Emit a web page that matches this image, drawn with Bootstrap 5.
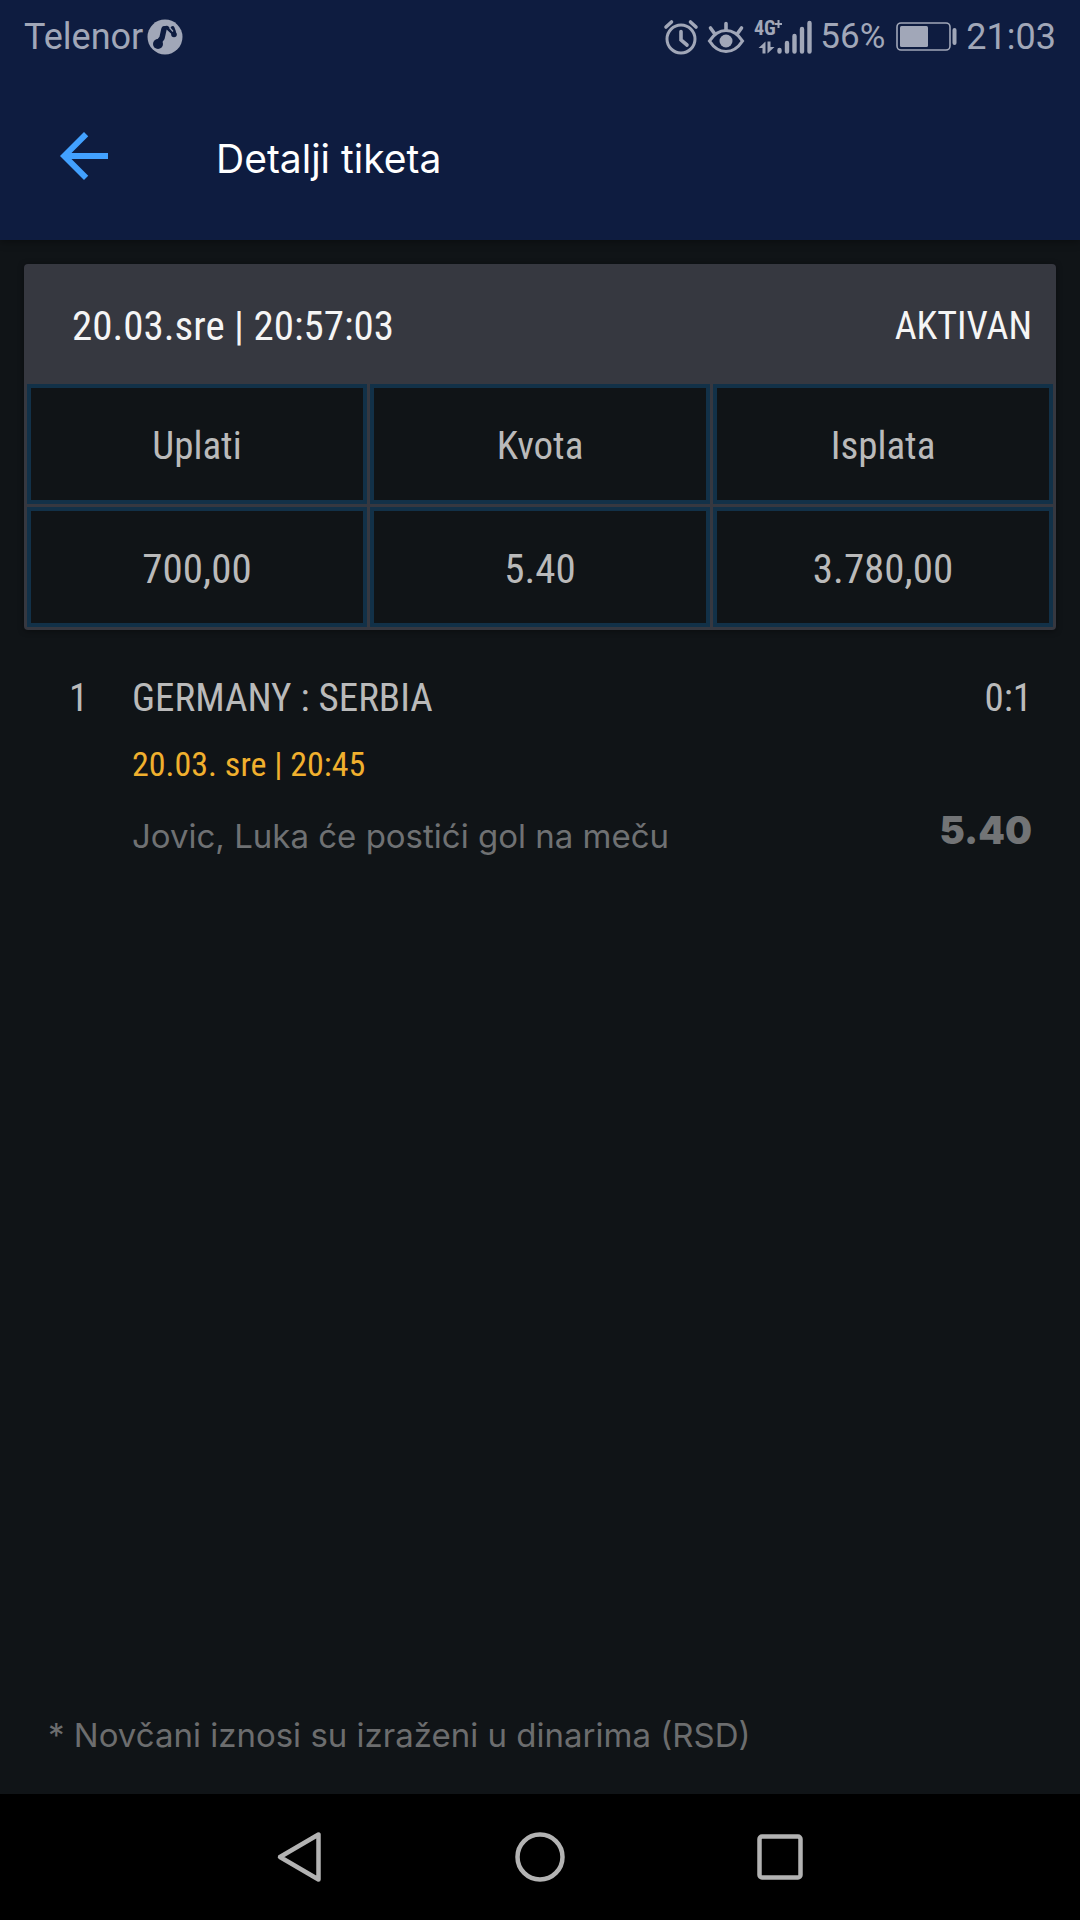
<!DOCTYPE html>
<html lang="sr-Latn">
<head>
<meta charset="utf-8">
<meta name="viewport" content="width=device-width, initial-scale=1">
<title>Detalji tiketa</title>
<link rel="stylesheet" href="https://cdn.jsdelivr.net/npm/bootstrap@5.3.0/dist/css/bootstrap.min.css">
<style>
  body { background: #101417; color: #bababa; font-family: Inter, "Liberation Sans", sans-serif; }
  svg { display: block; flex: none; }
  .condensed { font-family: "Roboto Condensed", Roboto, "Liberation Sans", sans-serif; }
  .app-top { background: #0e1c40; box-shadow: 0 2px 8px rgba(0, 0, 0, .35); }
  .status-bar { height: 72px; padding: 2px 24px 0; color: #a1a7b8; font: 36px/70px Roboto, "Liberation Sans", sans-serif; }
  .battery-level { font-size: 35px; }
  .app-bar { height: 168px; padding: 0 48px; gap: 96px; }
  .app-bar h1 { font-size: 39px; line-height: 48px; padding-top: 5px; font-weight: 400; color: #fff; }
  .back-btn { color: #42a1ff; }
  .ticket { margin: 24px 24px 0; background: #363840; border-radius: 4px; box-shadow: 0 1px 6px rgba(0, 0, 0, .4); }
  .ticket-head { padding: 32px 24px 25px 48px; font-size: 41px; line-height: 60px; color: #f5f5f5; }
  .ticket-state { font-size: 38px; }
  .caption-row, .bet { font-size: 39px; }
  .ticket-grid { border-collapse: separate; border-spacing: 3px; table-layout: fixed; font-size: 41px; line-height: 48px; }
  .ticket-grid th, .ticket-grid td { height: 120px; padding: 4px 0 0; border: 4px solid #123148; background: #101417; font-weight: 400; text-align: center; vertical-align: middle; }
  .bet { padding: 38px 48px 0 69px; line-height: 60px; }
  .bet-index { width: 63px; }
  .bet-time { font-size: 34px; line-height: 72px; color: #f0b02e; }
  .bet-pick { font-size: 33px; line-height: 72px; color: #6f7173; }
  .bet-odds { margin-top: 66px; line-height: 72px; font-size: 38px; font-weight: 900; color: #727476; }
  .note { padding: 0 48px 29px; font-size: 33px; line-height: 60px; color: #6c6d6e; }
  .nav-keys { background: #000; height: 126px; }
  .nav-keys .btn { color: #b3b3b3; }
</style>
</head>
<body class="d-flex flex-column min-vh-100">
<header class="app-top">
  <div class="status-bar d-flex align-items-center justify-content-between">
    <div class="d-flex align-items-center gap-1">
      <span>Telenor</span>
      <svg width="36" height="36" viewBox="0 0 36 36" aria-hidden="true">
        <circle cx="18" cy="18" r="17.5" fill="#a1a7b8"/>
        <g fill="none" stroke="#0e1c40" stroke-linecap="round" stroke-linejoin="round">
          <path d="M11 24L15 19L17 10" stroke-width="5.5"/>
          <path d="M17 9L20 8.500L27 15" stroke-width="3.500"/>
          <path d="M25.500 9L27 13" stroke-width="4"/>
        </g>
        <circle cx="11" cy="25" r="5" fill="#0e1c40"/>
        <circle cx="27" cy="15.500" r="2.800" fill="#0e1c40"/>
        <path d="M22.500 8.500L26 12.500" stroke="#a1a7b8" stroke-width="1.200"/>
      </svg>
    </div>
    <div class="d-flex align-items-center gap-2">
      <svg width="36" height="36" viewBox="0 0 36 36" fill="none" stroke="#a1a7b8" stroke-width="3" stroke-linecap="round" aria-label="Alarm" role="img">
        <circle cx="18" cy="20" r="14"/>
        <path d="M18 12.500V21L24 26" stroke-width="3.600"/>
        <path d="M3 8L8.500 3M33 8L27.500 3" stroke-width="3.600"/>
      </svg>
      <svg width="38" height="36" viewBox="0 0 38 36" fill="none" stroke="#a1a7b8" stroke-width="3.200" stroke-linecap="round" aria-label="Zaštita vida" role="img">
        <path d="M2.500 22C7 15 13 11.500 19 11.500S31 15 35.500 22C31 29 25 32.500 19 32.500S7 29 2.500 22Z"/>
        <circle cx="19" cy="22" r="6.500" fill="#a1a7b8" stroke="none"/>
        <path d="M19 11V4.500M7.500 14.500L3.500 9M30.500 14.500L34.500 9" stroke-width="3.600"/>
      </svg>
      <svg width="59" height="48" viewBox="0 -6 59 48" fill="#a1a7b8" aria-label="4G+ signal" role="img">
        <text x="1" y="16" font-family="Roboto Condensed, Roboto, sans-serif" font-weight="700" font-size="20">4G</text>
        <path d="M22 4h2.500v-3h2v3h2.500v2h-2.500v3h-2v-3h-2.500z"/>
        <path d="M9.500 34.500V29H5.500L12.500 22.500V34.500ZM14.500 22.500V34.500L21.500 28H17.500V22.500Z"/>
        <g stroke="#a1a7b8" stroke-width="4.400" stroke-linecap="round"><path d="M26.500 31V32.500M34 24V32.500M41.500 17V32.500M49 10V32.500M56.500 4V32.500"/></g>
      </svg>
      <span class="battery-level">56%</span>
      <svg width="65" height="36" viewBox="-3 1 65 36" aria-label="Baterija" role="img">
        <rect x="1" y="5" width="53" height="27" rx="4" fill="none" stroke="#a1a7b8" stroke-width="1.600"/>
        <rect x="4" y="8" width="28" height="21" rx="1.500" fill="#a1a7b8"/>
        <rect x="56.500" y="10" width="4" height="17" rx="2" fill="#a1a7b8"/>
      </svg>
      <span>21:03</span>
    </div>
  </div>
  <nav class="app-bar d-flex align-items-center">
    <button type="button" class="btn back-btn p-0 border-0" aria-label="Nazad">
      <svg width="72" height="72" viewBox="0 0 24 24" fill="currentColor"><path d="M20 11H7.830l5.590-5.590L12 4l-8 8 8 8 1.410-1.410L7.830 13H20v-2z"/></svg>
    </button>
    <h1 class="mb-0">Detalji tiketa</h1>
  </nav>
</header>

<main class="flex-grow-1">
  <section class="ticket condensed">
    <div class="ticket-head d-flex justify-content-between">
      <span>20.03.sre | 20:57:03</span>
      <span class="ticket-state">AKTIVAN</span>
    </div>
    <table class="ticket-grid w-100">
      <thead>
        <tr class="caption-row"><th scope="col">Uplati</th><th scope="col">Kvota</th><th scope="col">Isplata</th></tr>
      </thead>
      <tbody>
        <tr><td>700,00</td><td>5.40</td><td>3.780,00</td></tr>
      </tbody>
    </table>
  </section>

  <article class="bet d-flex">
    <div class="bet-index condensed">1</div>
    <div class="flex-grow-1">
      <div class="condensed">GERMANY : SERBIA</div>
      <div class="bet-time condensed">20.03. sre | 20:45</div>
      <div class="bet-pick">Jovic, Luka će postići gol na meču</div>
    </div>
    <div class="text-end">
      <div class="condensed">0:1</div>
      <div class="bet-odds">5.40</div>
    </div>
  </article>
</main>

<p class="note mb-0">* Novčani iznosi su izraženi u dinarima (RSD)</p>

<footer class="nav-keys d-flex justify-content-center">
  <div class="row g-0 col-8">
    <button type="button" class="col btn border-0 d-flex align-items-center justify-content-center" aria-label="Nazad">
      <svg width="50" height="52" viewBox="0 0 50 52" fill="none" stroke="currentColor" stroke-width="4.500" stroke-linejoin="round"><path d="M43.500 3.500V48.500L5 26Z"/></svg>
    </button>
    <button type="button" class="col btn border-0 d-flex align-items-center justify-content-center" aria-label="Početna">
      <svg width="52" height="52" viewBox="0 0 52 52" fill="none" stroke="currentColor" stroke-width="4.500"><circle cx="26" cy="26" r="22.500"/></svg>
    </button>
    <button type="button" class="col btn border-0 d-flex align-items-center justify-content-center" aria-label="Nedavne aplikacije">
      <svg width="52" height="52" viewBox="0 0 52 52" fill="none" stroke="currentColor" stroke-width="4.500"><rect x="5.500" y="5.500" width="41" height="41" rx="2.500"/></svg>
    </button>
  </div>
</footer>
<script src="https://cdn.jsdelivr.net/npm/bootstrap@5.3.0/dist/js/bootstrap.bundle.min.js"></script>
</body>
</html>
